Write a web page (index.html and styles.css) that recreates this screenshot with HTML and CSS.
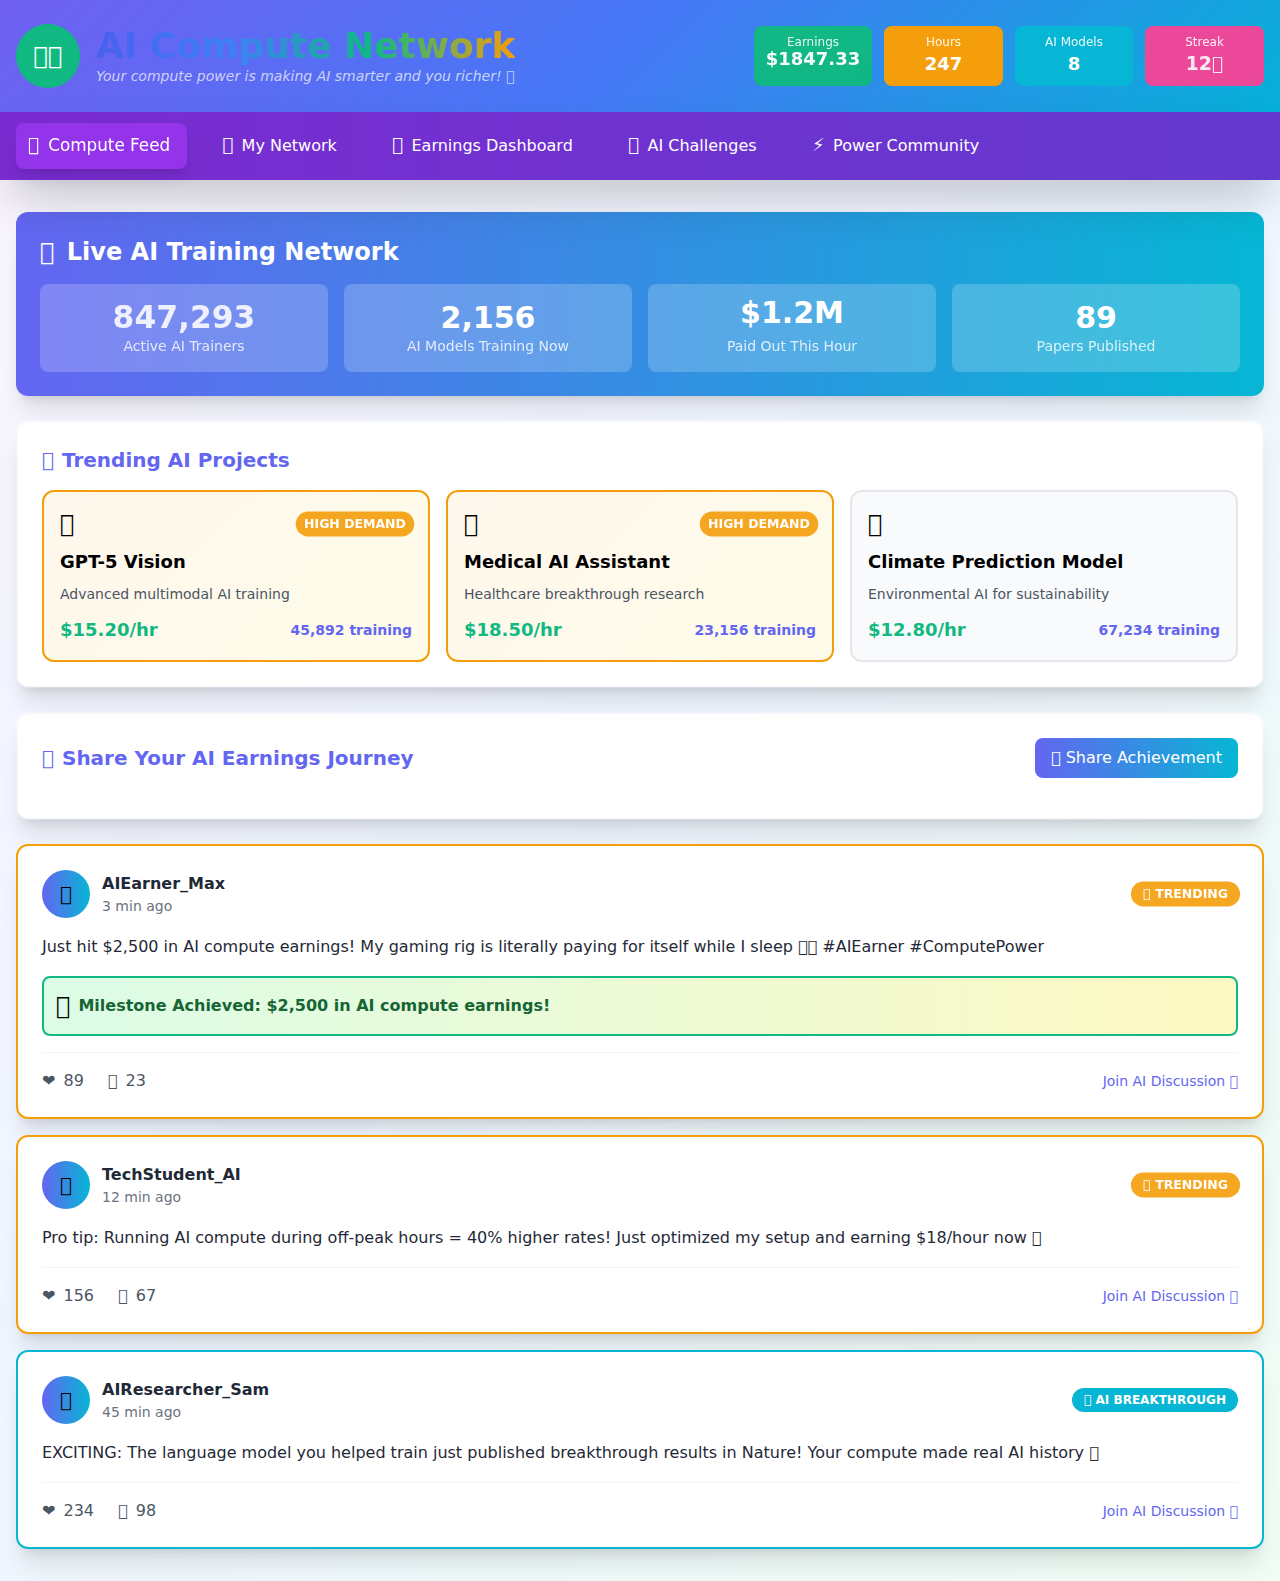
FILE: index.html
```html
<!DOCTYPE html>
<html>
<head>
  <title>AI Compute Network</title>
  <link rel="stylesheet" href="styles.css">
</head>
<body>
  <header class="topbar">
    <div class="brand">
      <div class="brand-logo">&#xE000;&#xE000;</div>
      <div>
        <h1 class="brand-title">AI Compute Network</h1>
        <p class="brand-sub">Your compute power is making AI smarter and you richer! &#xE000;</p>
      </div>
    </div>
    <div class="chips">
      <div class="chip chip-green">
        <div class="chip-label">Earnings</div>
        <div class="chip-value chip-value-high">$1847.33</div>
      </div>
      <div class="chip chip-orange">
        <div class="chip-label">Hours</div>
        <div class="chip-value">247</div>
      </div>
      <div class="chip chip-cyan">
        <div class="chip-label">AI Models</div>
        <div class="chip-value">8</div>
      </div>
      <div class="chip chip-pink">
        <div class="chip-label">Streak</div>
        <div class="chip-value pulse-soft">12&#xE000;</div>
      </div>
    </div>
  </header>

  <nav class="tabs">
    <a class="tab tab-active"><span>&#xE000;</span> Compute Feed</a>
    <a class="tab"><span>&#xE000;</span> My Network</a>
    <a class="tab"><span>&#xE000;</span> Earnings Dashboard</a>
    <a class="tab"><span>&#xE000;</span> AI Challenges</a>
    <a class="tab"><span>⚡</span> Power Community</a>
  </nav>

  <main class="page">
    <section class="hero">
      <h2 class="hero-title"><span class="hero-icon">&#xE000;</span> Live AI Training Network</h2>
      <div class="hero-grid">
        <div class="tile">
          <div class="tile-value pulse-soft">847,293</div>
          <div class="tile-label">Active AI Trainers</div>
        </div>
        <div class="tile">
          <div class="tile-value">2,156</div>
          <div class="tile-label">AI Models Training Now</div>
        </div>
        <div class="tile">
          <div class="tile-value tile-value-high">$1.2M</div>
          <div class="tile-label">Paid Out This Hour</div>
        </div>
        <div class="tile">
          <div class="tile-value">89</div>
          <div class="tile-label">Papers Published</div>
        </div>
      </div>
    </section>

    <section class="panel">
      <h3 class="panel-title"><span class="panel-icon">&#xE000;</span> Trending AI Projects</h3>
      <div class="projects">
        <div class="project project-hot">
          <div class="project-top">
            <span class="project-icon">&#xE000;</span>
            <span class="badge badge-orange badge-pulse">HIGH DEMAND</span>
          </div>
          <h4 class="project-name">GPT-5 Vision</h4>
          <p class="project-desc">Advanced multimodal AI training</p>
          <div class="project-foot">
            <span class="project-rate">$15.20/hr</span>
            <span class="project-count">45,892 training</span>
          </div>
        </div>
        <div class="project project-hot">
          <div class="project-top">
            <span class="project-icon">&#xE000;</span>
            <span class="badge badge-orange badge-pulse">HIGH DEMAND</span>
          </div>
          <h4 class="project-name">Medical AI Assistant</h4>
          <p class="project-desc">Healthcare breakthrough research</p>
          <div class="project-foot">
            <span class="project-rate">$18.50/hr</span>
            <span class="project-count">23,156 training</span>
          </div>
        </div>
        <div class="project">
          <div class="project-top">
            <span class="project-icon">&#xE000;</span>
          </div>
          <h4 class="project-name">Climate Prediction Model</h4>
          <p class="project-desc">Environmental AI for sustainability</p>
          <div class="project-foot">
            <span class="project-rate">$12.80/hr</span>
            <span class="project-count">67,234 training</span>
          </div>
        </div>
      </div>
    </section>

    <section class="panel">
      <div class="share-row">
        <h3 class="share-title"><span class="panel-icon">&#xE000;</span> Share Your AI Earnings Journey</h3>
        <button class="share-btn">&#xE000; Share Achievement</button>
      </div>
    </section>

    <div class="feed">
      <article class="post post-trending">
        <div class="post-head">
          <div class="post-user">
            <div class="avatar">&#xE000;</div>
            <div>
              <div class="post-name">AIEarner_Max</div>
              <div class="post-time">3 min ago</div>
            </div>
          </div>
          <span class="badge badge-orange badge-pulse badge-wide">&#xE000; TRENDING</span>
        </div>
        <p class="post-text">Just hit $2,500 in AI compute earnings! My gaming rig is literally paying for itself while I sleep &#xE000;&#xE000; #AIEarner #ComputePower</p>
        <div class="milestone">
          <span class="milestone-icon">&#xE000;</span>
          <span class="milestone-text">Milestone Achieved: $2,500 in AI compute earnings!</span>
        </div>
        <div class="post-foot">
          <div class="post-stats">
            <span class="post-stat"><span>❤</span> 89</span>
            <span class="post-stat"><span>&#xE000;</span> 23</span>
          </div>
          <a class="post-link">Join AI Discussion &#xE000;</a>
        </div>
      </article>

      <article class="post post-trending">
        <div class="post-head">
          <div class="post-user">
            <div class="avatar">&#xE000;</div>
            <div>
              <div class="post-name">TechStudent_AI</div>
              <div class="post-time">12 min ago</div>
            </div>
          </div>
          <span class="badge badge-orange badge-pulse badge-wide">&#xE000; TRENDING</span>
        </div>
        <p class="post-text">Pro tip: Running AI compute during off-peak hours = 40% higher rates! Just optimized my setup and earning $18/hour now &#xE000;</p>
        <div class="post-foot">
          <div class="post-stats">
            <span class="post-stat"><span>❤</span> 156</span>
            <span class="post-stat"><span>&#xE000;</span> 67</span>
          </div>
          <a class="post-link">Join AI Discussion &#xE000;</a>
        </div>
      </article>

      <article class="post post-breakthrough">
        <div class="post-head">
          <div class="post-user">
            <div class="avatar">&#xE000;</div>
            <div>
              <div class="post-name">AIResearcher_Sam</div>
              <div class="post-time">45 min ago</div>
            </div>
          </div>
          <span class="badge badge-cyan badge-wide">&#xE000; AI BREAKTHROUGH</span>
        </div>
        <p class="post-text">EXCITING: The language model you helped train just published breakthrough results in Nature! Your compute made real AI history &#xE000;</p>
        <div class="post-foot">
          <div class="post-stats">
            <span class="post-stat"><span>❤</span> 234</span>
            <span class="post-stat"><span>&#xE000;</span> 98</span>
          </div>
          <a class="post-link">Join AI Discussion &#xE000;</a>
        </div>
      </article>
    </div>
  </main>
</body>
</html>
```

FILE: styles.css
```css
/* base */
* {
  box-sizing: border-box;
}

body {
  margin: 0;
  font-family: "DejaVu Sans", sans-serif;
  font-size: 16px;
  line-height: 24px;
  color: #000;
  background: linear-gradient(135deg, #faf5ff, #eff6ff, #f0fdf4);
}

h1, h2, h3, h4, p {
  margin: 0;
}

/* top bar */
.topbar {
  height: 112px;
  padding: 0 16px;
  display: flex;
  align-items: center;
  justify-content: space-between;
  background: linear-gradient(135deg, #7060f2, #4479f5, #06b0d8);
}

.brand {
  display: flex;
  align-items: center;
  gap: 16px;
}

.brand-logo {
  width: 64px;
  height: 64px;
  border-radius: 50%;
  background: #10b981;
  color: white;
  font-size: 24px;
  display: flex;
  align-items: center;
  justify-content: center;
}

.brand-title {
  width: fit-content;
  font-size: 36px;
  line-height: 40px;
  font-weight: bold;
  background: linear-gradient(90deg, #4a60ee, #3b82f6, #10b981, #f59e0b);
  -webkit-background-clip: text;
  background-clip: text;
  color: transparent;
}

.brand-sub {
  font-size: 14px;
  line-height: 20px;
  font-style: italic;
  color: rgba(255, 255, 255, 0.7);
}

.chips {
  display: grid;
  grid-template-columns: 118px 119px 118px 119px;
  gap: 12px;
}

.chip {
  height: 60px;
  padding: 8px;
  border-radius: 8px;
  text-align: center;
  color: white;
}

.chip-green { background: #10b981; opacity: 0.97; }
.chip-orange { background: #f59e0b; }
.chip-cyan { background: #06b6d4; }
.chip-pink { background: #ec4899; }

.chip-label {
  font-size: 12px;
  line-height: 16px;
  opacity: 0.9;
}

.chip-value {
  font-size: 18px;
  line-height: 28px;
  font-weight: bold;
}

.chip-value-high {
  line-height: 18px;
}

.pulse-soft {
  opacity: 0.88;
  transform: scale(1.045);
}

/* nav tabs */
.tabs {
  position: relative;
  height: 68px;
  padding: 0 20px;
  display: flex;
  align-items: center;
  gap: 28px;
  background: linear-gradient(90deg, #7a2bd0, #6439cf);
  box-shadow: 0 25px 50px -12px rgba(0, 0, 0, 0.25);
}

.tab {
  display: block;
  padding: 10px 16px 10px 11.5px;
  border-radius: 8px;
  color: white;
  white-space: nowrap;
}

.tab span {
  font-size: 18px;
  line-height: 1;
  margin-right: 3.3px;
}

.tab-active {
  background: #9333ea;
  transform: scale(1.05);
  box-shadow: 0 10px 15px -3px rgba(0, 0, 0, 0.1), 0 4px 6px -4px rgba(0, 0, 0, 0.1);
}

/* main column */
.page {
  padding: 32px 16px;
  display: flex;
  flex-direction: column;
  gap: 24px;
}

.hero {
  padding: 24px;
  border-radius: 12px;
  color: white;
  background: linear-gradient(90deg, #6366f1, #06b6d4);
  box-shadow: 0 20px 25px -5px rgba(0, 0, 0, 0.1), 0 8px 10px -6px rgba(0, 0, 0, 0.1);
}

.hero-title {
  font-size: 24px;
  line-height: 32px;
  margin-bottom: 16px;
}

.hero-icon {
  margin-right: 4px;
}

.hero-grid {
  display: grid;
  grid-template-columns: repeat(4, 1fr);
  gap: 16px;
}

.tile {
  padding: 16px;
  border-radius: 8px;
  text-align: center;
  background: rgba(255, 255, 255, 0.2);
}

.tile-value {
  font-size: 30px;
  line-height: 36px;
  font-weight: bold;
}

.tile-value-high {
  line-height: 26px;
  padding-bottom: 10px;
}

.tile-label {
  font-size: 14px;
  line-height: 20px;
  opacity: 0.8;
}

.panel {
  padding: 24px;
  border: 2px solid rgba(255, 255, 255, 0.3);
  border-radius: 12px;
  background: white;
  background-clip: padding-box;
  box-shadow: 0 20px 25px -5px rgba(0, 0, 0, 0.1), 0 8px 10px -6px rgba(0, 0, 0, 0.1);
}

.panel-title {
  font-size: 20px;
  line-height: 28px;
  color: #6366f1;
  margin-bottom: 16px;
}

.panel-icon {
  margin-right: 1px;
}

.projects {
  display: grid;
  grid-template-columns: repeat(3, 1fr);
  gap: 16px;
}

.project {
  padding: 16px;
  border: 2px solid #e5e7eb;
  border-radius: 12px;
  background: #f9fafb;
}

.project-hot {
  border-color: #f59e0b;
  background: linear-gradient(135deg, #fff7ed, #fefce8);
}

.project-top {
  display: flex;
  align-items: center;
  justify-content: space-between;
  margin-bottom: 8px;
}

.project-icon {
  font-size: 24px;
  line-height: 32px;
}

.project-name {
  font-size: 18px;
  line-height: 28px;
  margin-bottom: 8px;
}

.project-desc {
  font-size: 14px;
  line-height: 20px;
  color: #4b5563;
  margin-bottom: 12px;
}

.project-foot {
  display: flex;
  align-items: center;
  justify-content: space-between;
  height: 28px;
}

.project-rate {
  font-size: 18px;
  font-weight: bold;
  color: #10b981;
}

.project-count {
  font-size: 14px;
  font-weight: bold;
  color: #6366f1;
}

/* badges */
.badge {
  padding: 4px 8px;
  border-radius: 999px;
  font-size: 12px;
  line-height: 16px;
  font-weight: bold;
  color: white;
}

.badge-wide {
  padding: 4px 12px;
}

.badge-orange {
  background: #f59e0b;
}

.badge-cyan {
  background: #06b6d4;
}

.badge-pulse {
  opacity: 0.9;
  transform: scale(1.04);
}

/* share box */
.share-row {
  display: flex;
  align-items: center;
  justify-content: space-between;
  margin-bottom: 16px;
}

.share-title {
  font-size: 20px;
  line-height: 28px;
  color: #6366f1;
}

.share-btn {
  height: 40px;
  padding: 8px 16px;
  border: none;
  border-radius: 8px;
  font: inherit;
  color: white;
  background: linear-gradient(90deg, #6366f1, #06b6d4);
}

/* posts */
.feed {
  display: flex;
  flex-direction: column;
  gap: 16px;
}

.post {
  padding: 24px;
  border: 2px solid #e5e7eb;
  border-radius: 12px;
  background: white;
  box-shadow: 0 20px 25px -5px rgba(0, 0, 0, 0.1), 0 8px 10px -6px rgba(0, 0, 0, 0.1);
}

.post-trending { border-color: #f59e0b; }
.post-breakthrough { border-color: #06b6d4; }

.post-head {
  display: flex;
  align-items: center;
  justify-content: space-between;
  margin-bottom: 16px;
}

.post-user {
  display: flex;
  align-items: center;
  gap: 12px;
}

.avatar {
  width: 48px;
  height: 48px;
  border-radius: 50%;
  font-size: 20px;
  display: flex;
  align-items: center;
  justify-content: center;
  background: linear-gradient(90deg, #6366f1, #06b6d4);
}

.post-name {
  font-weight: bold;
  color: #1f2937;
}

.post-time {
  font-size: 14px;
  line-height: 20px;
  color: #6b7280;
}

.post-text {
  line-height: 26px;
  color: #1f2937;
  margin-bottom: 16px;
}

.milestone {
  height: 60px;
  padding: 12px;
  margin-bottom: 16px;
  display: flex;
  align-items: center;
  gap: 8px;
  border: 2px solid #10b981;
  border-radius: 8px;
  background: linear-gradient(90deg, #dcfce7, #fef9c3);
}

.milestone-icon {
  font-size: 24px;
  line-height: 32px;
}

.milestone-text {
  font-weight: bold;
  color: #166534;
}

.post-foot {
  padding-top: 16px;
  border-top: 1px solid #f3f4f6;
  display: flex;
  align-items: center;
  justify-content: space-between;
}

.post-stats {
  display: flex;
  gap: 24px;
  color: #4b5563;
}

.post-stat span {
  margin-right: 3px;
}

.post-link {
  font-size: 14px;
  color: #6366f1;
}
```
